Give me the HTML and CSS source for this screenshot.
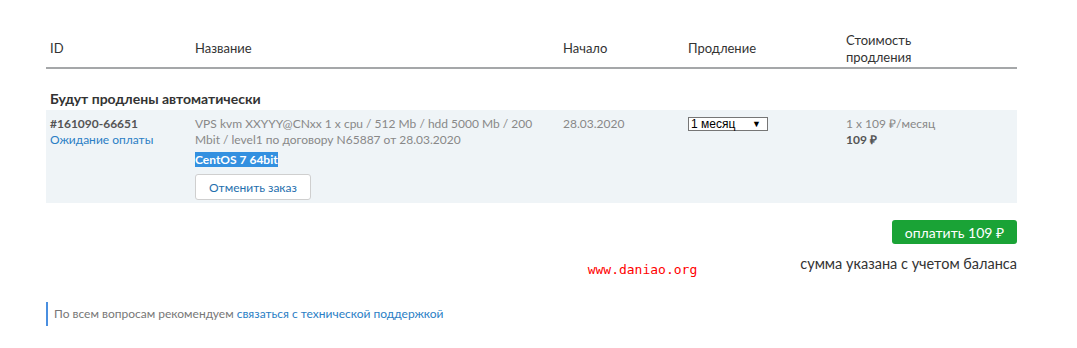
FILE: index.html
```html
<!DOCTYPE html>
<html lang="ru">
<head>
  <meta charset="UTF-8" />
  <title>Продление услуг</title>
  <link rel="stylesheet" href="styles.css">
</head>
<body>
  <div class="page">
    <div class="grid head">
      <div class="cell">ID</div>
      <div class="cell">Название</div>
      <div class="cell">Начало</div>
      <div class="cell">Продление</div>
      <div class="cell">Стоимость<br>продления</div>
    </div>

    <h3 class="group-title">Будут продлены автоматически</h3>

    <div class="grid row">
      <div class="cell">
        <div class="order-id">#161090-66651</div>
        <a class="link" href="#">Ожидание оплаты</a>
      </div>
      <div class="cell">
        <div class="muted">VPS kvm XXYYY@CNxx 1 x cpu / 512 Mb / hdd 5000 Mb / 200 Mbit / level1 по договору N65887 от 28.03.2020</div>
        <div class="os"><span class="selected">CentOS 7 64bit</span></div>
        <button class="cancel-button">Отменить заказ</button>
      </div>
      <div class="cell muted">28.03.2020</div>
      <div class="cell">
        <div class="period">1 месяц <span class="arrow">▼</span></div>
      </div>
      <div class="cell">
        <div class="muted">1 x 109 ₽/месяц</div>
        <div class="total">109 ₽</div>
      </div>
    </div>

    <div class="pay">
      <button class="pay-button">оплатить 109 ₽</button>
      <div class="pay-note">
        <span class="watermark">www.daniao.org</span>
        <span>сумма указана с учетом баланса</span>
      </div>
    </div>

    <div class="help">По всем вопросам рекомендуем <a class="link" href="#">связаться с технической поддержкой</a></div>
  </div>
</body>
</html>
```

FILE: styles.css
```css
* {
  box-sizing: border-box;
}
body {
  margin: 0;
  font-family: Lato, "Open Sans", sans-serif;
  font-size: 13px;
  color: #333;
  background: #fff;
}

.page {
  width: 971px;
  margin-left: 46px;
  padding-top: 30px;
}

.grid {
  display: grid;
  grid-template-columns: 145px 368px 125px 158px 1fr;
}

.cell {
  padding-left: 4px;
}

.head {
  align-items: center;
  height: 39px;
  border-bottom: 2px solid #a5a7a9;
  line-height: 17px;
  color: #333;
}

.group-title {
  margin: 0;
  padding: 21px 4px 2px;
  font-size: 14px;
  font-weight: bold;
  line-height: 18px;
  color: #333;
}

.row {
  background: #eff4f7;
  padding: 6px 0 3px;
  font-size: 12px;
  line-height: 16px;
}

.order-id {
  font-weight: bold;
  color: #555;
}

.link {
  color: #2a7ec5;
  text-decoration: none;
}

.muted {
  color: #888;
}

.os {
  margin-top: 4px;
  font-weight: bold;
}

.selected {
  background: #3390e0;
  color: #fff;
}

.cancel-button {
  margin-top: 6px;
  height: 26px;
  padding: 0 13px;
  font-family: inherit;
  font-size: 12px;
  color: #1f6fae;
  background: #fff;
  border: 1px solid #cfcfcf;
  border-radius: 3px;
}

.period {
  display: flex;
  justify-content: space-between;
  align-items: center;
  width: 80px;
  height: 14px;
  margin-top: 1px;
  padding: 0 6px 0 2px;
  font-family: "Liberation Sans", Arial, sans-serif;
  font-size: 12px;
  line-height: 12px;
  color: #000;
  background: #fff;
  border: 1px solid #767676;
}

.arrow {
  font-size: 9px;
}

.total {
  font-weight: bold;
  color: #555;
}

.pay {
  display: flex;
  flex-direction: column;
  align-items: flex-end;
  padding-top: 17px;
}

.pay-button {
  height: 24px;
  padding: 0 13px;
  font-family: inherit;
  font-size: 14px;
  color: #fff;
  background: #1aa336;
  border: none;
  border-radius: 3px;
}

.pay-note {
  display: flex;
  align-items: flex-start;
  margin-top: 11px;
  font-size: 14.5px;
  line-height: 18px;
  color: #333;
}

.watermark {
  margin: 6px 103px 0 0;
  font-family: "DejaVu Sans Mono", monospace;
  font-size: 13px;
  color: #f00;
}

.help {
  margin-top: 23px;
  padding: 4px 0 5px 6px;
  border-left: 2px solid #4a8fe0;
  font-size: 12px;
  color: #777;
  line-height: 15px;
}
```
